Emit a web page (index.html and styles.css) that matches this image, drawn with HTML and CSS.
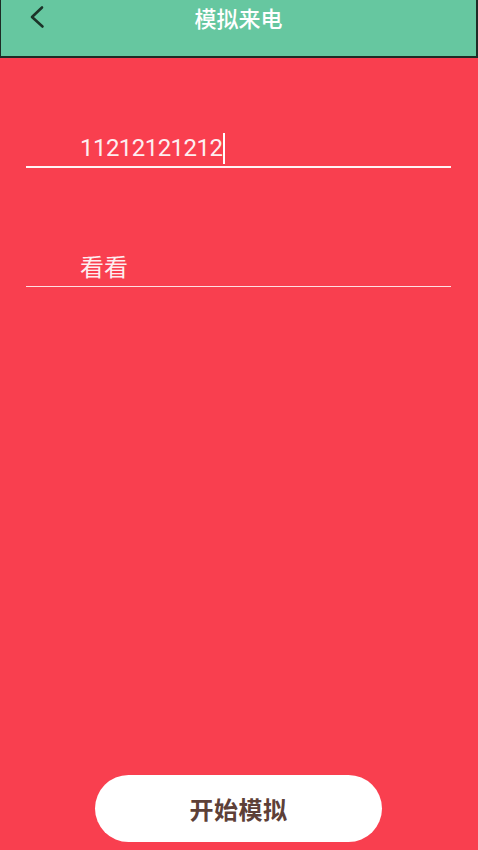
FILE: index.html
```html
<!DOCTYPE html>
<html lang="zh-CN">
<head>
<meta charset="utf-8">
<title>模拟来电</title>
<link rel="stylesheet" href="styles.css">
</head>
<body>
<div class="page">
  <header class="topbar">
    <div class="topbar-row">
      <span class="back">
        <svg width="16" height="24" viewBox="0 0 16 24" fill="none" stroke="#1c3328" stroke-width="2.6" stroke-linecap="round" stroke-linejoin="round"><path d="M13 2.5 L3 12 L13.5 21.5"/></svg>
      </span>
      <h1 class="title">模拟来电</h1>
    </div>
  </header>
  <main class="content">
    <div class="field field-focused">
      <span class="field-text field-digits">11212121212</span><span class="caret"></span>
    </div>
    <div class="field field-second">
      <span class="field-text">看看</span>
    </div>
    <div class="actions">
      <button class="start-btn" type="button">开始模拟</button>
    </div>
  </main>
</div>
</body>
</html>
```

FILE: styles.css
```css
html, body {
  margin: 0;
  padding: 0;
}
body {
  font-family: Roboto, "Noto Sans CJK SC", sans-serif;
  background: #f93f4f;
}
.page {
  width: 478px;
  height: 850px;
  display: flex;
  flex-direction: column;
  background: #f93f4f;
}
.topbar {
  height: 56px;
  background: #66c7a0;
  border-left: 1px solid #1e2b25;
  border-right: 2px solid #1e2b25;
  border-bottom: 2px solid #1e2b25;
  box-sizing: content-box;
  flex: none;
}
.topbar-row {
  position: relative;
  height: 34px;
  display: flex;
  align-items: center;
  justify-content: center;
}
.back {
  position: absolute;
  left: 28px;
  top: 5px;
  width: 16px;
  height: 24px;
  display: block;
}
.back svg {
  display: block;
}
.title {
  margin: 0;
  font-family: "Noto Sans CJK SC", sans-serif;
  font-weight: 500;
  font-size: 22px;
  line-height: 34px;
  color: #ffffff;
}
.content {
  flex: 1;
  display: flex;
  flex-direction: column;
  padding: 0 27px 0 26px;
}
.field {
  padding: 0 0 3px 54px;
  height: 30px;
  line-height: 30px;
  font-size: 24px;
  color: #fdeef0;
  display: flex;
  align-items: center;
}
.field-focused {
  margin-top: 75px;
  border-bottom: 2px solid #fff4f5;
}
.field-second {
  margin-top: 85px;
  border-bottom: 1px solid rgba(255, 240, 242, 0.9);
}
.field-text {
  white-space: nowrap;
}
.field-digits {
  letter-spacing: -0.55px;
}
.caret {
  display: inline-block;
  width: 2px;
  height: 31px;
  background: #ffffff;
  margin-left: 1px;
  align-self: center;
}
.actions {
  margin-top: auto;
  margin-bottom: 8px;
  display: flex;
  justify-content: center;
}
.start-btn {
  width: 287px;
  height: 67px;
  border: none;
  border-radius: 34px;
  background: #ffffff;
  color: #5d4037;
  font-family: "Noto Sans CJK SC", sans-serif;
  font-weight: 700;
  font-size: 24px;
  letter-spacing: 0.5px;
  padding: 0;
  cursor: pointer;
}
```
